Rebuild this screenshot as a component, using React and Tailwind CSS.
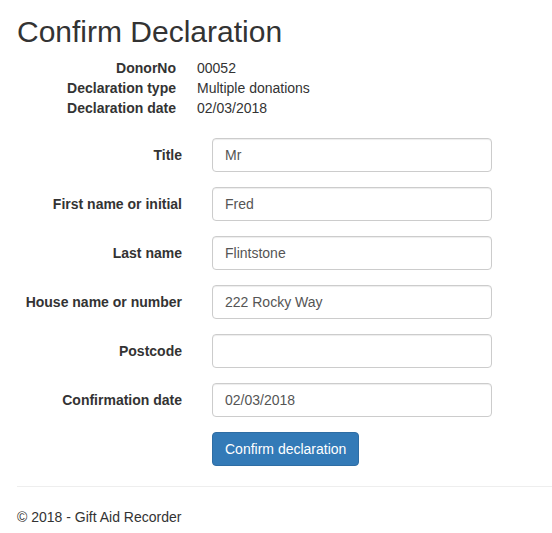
import React from 'react';

// Donor summary shown above the form
const details = [
  { label: 'DonorNo', value: '00052' },
  { label: 'Declaration type', value: 'Multiple donations' },
  { label: 'Declaration date', value: '02/03/2018' },
];

const fields = [
  { label: 'Title', name: 'title', value: 'Mr' },
  { label: 'First name or initial', name: 'firstName', value: 'Fred' },
  { label: 'Last name', name: 'lastName', value: 'Flintstone' },
  { label: 'House name or number', name: 'house', value: '222 Rocky Way' },
  { label: 'Postcode', name: 'postcode', value: '' },
  { label: 'Confirmation date', name: 'confirmDate', value: '02/03/2018' },
];

function FormRow({ label, name, value }) {
  return (
    <div className="mb-[15px] grid grid-cols-[167px_280px] gap-x-[30px]">
      <label htmlFor={name} className="pt-[7px] text-right font-bold">
        {label}
      </label>
      <input
        id={name}
        type="text"
        defaultValue={value}
        className="block h-[34px] w-[280px] rounded-[4px] border border-[#ccc] bg-white px-[12px] py-[6px] text-[14px] leading-[20px] text-[#555] shadow-[inset_0_1px_1px_rgba(0,0,0,0.075)] outline-none"
      />
    </div>
  );
}

export default function App() {
  return (
    <div className="min-h-screen bg-white font-['Liberation_Sans',Arial,sans-serif] text-[14px] leading-[20px] text-[#333]">
      <div className="pl-[15px]">
        <h2 className="mt-[15px] mb-[10px] pl-[2px] text-[30px] leading-[33px] font-medium">
          Confirm Declaration
        </h2>

        <dl className="mb-[20px] pl-[1px]">
          {details.map(d => (
            <div key={d.label} className="grid grid-cols-[160px_1fr] gap-x-[21px]">
              <dt className="truncate text-right font-bold">{d.label}</dt>
              <dd>{d.value}</dd>
            </div>
          ))}
        </dl>

        <form onSubmit={e => e.preventDefault()}>
          {fields.map(f => (
            <FormRow key={f.name} {...f} />
          ))}
          <div className="grid grid-cols-[167px_auto] gap-x-[30px]">
            <div />
            <div>
              <button
                type="submit"
                className="h-[34px] rounded-[4px] border border-[#2e6da4] bg-[#337ab7] px-[12px] py-[6px] text-[14px] leading-[20px] text-white"
              >
                Confirm declaration
              </button>
            </div>
          </div>
        </form>
      </div>

      <hr className="mt-[20px] ml-[17px] border-0 border-t border-[#eee]" />

      <footer className="pl-[17px]">
        <p className="mt-[20px]">© 2018 - Gift Aid Recorder</p>
      </footer>
    </div>
  );
}
